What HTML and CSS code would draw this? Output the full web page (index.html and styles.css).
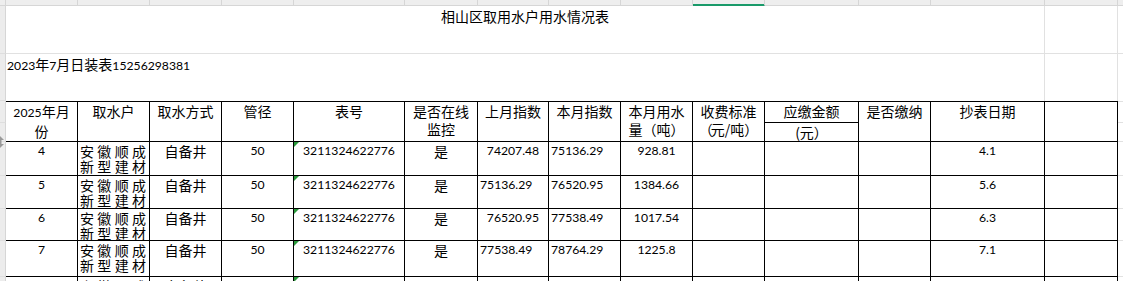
FILE: index.html
```html
<!DOCTYPE html>
<html lang="zh-CN">
<head>
<meta charset="utf-8">
<title>相山区取用水户用水情况表</title>
<link rel="stylesheet" href="styles.css">
</head>
<body>
<div class="sheet">
  <!-- column header strip -->
  <div class="corner"></div>
  <div class="hd"></div><div class="hd"></div><div class="hd"></div><div class="hd"></div><div class="hd"></div>
  <div class="hd"></div><div class="hd"></div><div class="hd"></div><div class="hd"></div><div class="hd sel"></div>
  <div class="hd"></div><div class="hd"></div><div class="hd"></div><div class="hd"></div><div class="hd hf"></div>

  <!-- title row -->
  <div class="g"></div>
  <div class="w title span13">相山区取用水户用水情况表</div>
  <div class="w"></div>
  <div class="w f"></div>

  <!-- sub title row -->
  <div class="g"></div>
  <div class="w sub span13 nb"><span class="d">2023</span>年<span class="d">7</span>月日装表<span class="d">15256298381</span></div>
  <div class="w nb"></div>
  <div class="w f nb"></div>

  <!-- header row A -->
  <div class="g"></div>
  <div class="t th rs2"><span class="d">2025</span>年月<br>份</div>
  <div class="t th rs2">取水户</div>
  <div class="t th rs2">取水方式</div>
  <div class="t th rs2">管径</div>
  <div class="t th rs2">表号</div>
  <div class="t th rs2">是否在线<br>监控</div>
  <div class="t th rs2">上月指数</div>
  <div class="t th rs2">本月指数</div>
  <div class="t th rs2">本月用水<br>量（吨）</div>
  <div class="t th rs2">收费标准<br><span class="op">（</span>元/吨）</div>
  <div class="t th">应缴金额</div>
  <div class="t th rs2">是否缴纳</div>
  <div class="t th rs2">抄表日期</div>
  <div class="t th rs2"></div>
  <div class="w f ft"></div>

  <!-- header row B -->
  <div class="g"></div>
  <div class="t th2">(元）</div>
  <div class="w f"></div>

  <!-- data row 1 -->
  <div class="g"></div>
  <div class="t n">4</div>
  <div class="t nm"><span>安徽顺成</span><span>新型建材</span></div>
  <div class="t">自备井</div>
  <div class="t n">50</div>
  <div class="t n tk">3211324622776</div>
  <div class="t">是</div>
  <div class="t n">74207.48</div>
  <div class="t n l">75136.29</div>
  <div class="t n">928.81</div>
  <div class="t"></div>
  <div class="t"></div>
  <div class="t"></div>
  <div class="t n">4.1</div>
  <div class="t"></div>
  <div class="w f"></div>

  <!-- data row 2 -->
  <div class="g"></div>
  <div class="t n">5</div>
  <div class="t nm"><span>安徽顺成</span><span>新型建材</span></div>
  <div class="t">自备井</div>
  <div class="t n">50</div>
  <div class="t n tk">3211324622776</div>
  <div class="t">是</div>
  <div class="t n l">75136.29</div>
  <div class="t n l">76520.95</div>
  <div class="t n">1384.66</div>
  <div class="t"></div>
  <div class="t"></div>
  <div class="t"></div>
  <div class="t n">5.6</div>
  <div class="t"></div>
  <div class="w f"></div>

  <!-- data row 3 -->
  <div class="g"></div>
  <div class="t n">6</div>
  <div class="t nm"><span>安徽顺成</span><span>新型建材</span></div>
  <div class="t">自备井</div>
  <div class="t n">50</div>
  <div class="t n tk">3211324622776</div>
  <div class="t">是</div>
  <div class="t n">76520.95</div>
  <div class="t n l">77538.49</div>
  <div class="t n">1017.54</div>
  <div class="t"></div>
  <div class="t"></div>
  <div class="t"></div>
  <div class="t n">6.3</div>
  <div class="t"></div>
  <div class="w f"></div>

  <!-- data row 4 -->
  <div class="g"></div>
  <div class="t n">7</div>
  <div class="t nm"><span>安徽顺成</span><span>新型建材</span></div>
  <div class="t">自备井</div>
  <div class="t n">50</div>
  <div class="t n tk">3211324622776</div>
  <div class="t">是</div>
  <div class="t n l">77538.49</div>
  <div class="t n l">78764.29</div>
  <div class="t n">1225.8</div>
  <div class="t"></div>
  <div class="t"></div>
  <div class="t"></div>
  <div class="t n">7.1</div>
  <div class="t"></div>
  <div class="w f"></div>

  <!-- data row 5 (partly visible) -->
  <div class="g"></div>
  <div class="t n">8</div>
  <div class="t nm"><span>安徽顺成</span><span>新型建材</span></div>
  <div class="t">自备井</div>
  <div class="t n">50</div>
  <div class="t n tk">3211324622776</div>
  <div class="t">是</div>
  <div class="t n">78764.29</div>
  <div class="t n l"></div>
  <div class="t n"></div>
  <div class="t"></div>
  <div class="t"></div>
  <div class="t"></div>
  <div class="t n"></div>
  <div class="t"></div>
  <div class="w f"></div>
</div>

<svg class="grip" width="8" height="12" viewBox="0 0 8 12" aria-hidden="true">
  <path d="M4 0 L8 4 L5.5 4 L5.5 8 L8 8 L4 12 L0 8 L2.5 8 L2.5 4 L0 4 Z" fill="#9a9a9a"/>
</svg>
</body>
</html>
```

FILE: styles.css
```css
* {
  box-sizing: border-box;
}

html,
body {
  margin: 0;
  padding: 0;
}

body {
  width: 1123px;
  height: 281px;
  overflow: hidden;
  position: relative;
  background: #ffffff;
  color: #000000;
  font-family: "Noto Sans CJK SC", "Noto Sans CJK JP", sans-serif;
  font-size: 14px;
  text-spacing-trim: space-all;
}

.sheet {
  display: grid;
  grid-template-columns: 6px 72px 72px 72px 72px 111px 73px 71px 72px 72px 72px 94px 72px 114px 73px 1fr;
  grid-template-rows: 6px 48px 47px 22px 19px 34px 33px 32px 36px 34px;
}

/* column header strip */
.corner,
.hd {
  background: #eeeeee;
  border-right: 1px solid #d6d6d6;
  border-bottom: 1px solid #d6d6d6;
}

.hd.hf {
  border-right: none;
}

.hd.sel {
  border-bottom-color: #1a9a6a;
  box-shadow: inset 0 -1px 0 #1a9a6a;
}

/* row gutter */
.g {
  background: #ececec;
  border-right: 1px solid #d6d6d6;
  border-bottom: 1px solid #dedede;
}

/* plain worksheet cells */
.w {
  background: #ffffff;
  border-right: 1px solid #e1e1e1;
  border-bottom: 1px solid #e1e1e1;
}

.w.f {
  border-right: none;
}

.w.nb {
  border-bottom: none;
}

.w.ft {
  border-top: 1px solid #e1e1e1;
}

.span13 {
  grid-column: span 13;
}

.title {
  text-align: center;
  line-height: 18px;
  padding-top: 1px;
  white-space: nowrap;
}

.sub {
  line-height: 18px;
  padding: 1px 0 0 1px;
  white-space: nowrap;
}

.d {
  font-family: "Lato", "Liberation Sans", sans-serif;
  font-size: 12.2px;
}

/* table cells */
.t {
  position: relative;
  background: #ffffff;
  border-right: 1px solid #000000;
  border-bottom: 1px solid #000000;
  text-align: center;
  line-height: 15px;
  padding: 2px 2px 0;
  overflow: hidden;
  white-space: nowrap;
}

.th {
  border-top: 1px solid #000000;
  line-height: 18px;
  padding-top: 0;
}

.th2 {
  line-height: 18px;
  padding-top: 0;
}

.op {
  display: inline-block;
  width: 12px;
  text-align: right;
}

.rs2 {
  grid-row: span 2;
}

.n {
  font-family: "Lato", "Liberation Sans", sans-serif;
  font-size: 12.2px;
  padding-top: 1px;
}

.l {
  text-align: left;
  padding-left: 2px;
}

.nm {
  padding: 2px 3px 0 2px;
}

.nm span {
  display: block;
  text-align: justify;
  text-align-last: justify;
}

/* small green marker: number stored as text */
.tk::before {
  content: "";
  position: absolute;
  left: 0;
  top: 0;
  border-top: 5px solid #2b9a3c;
  border-right: 5px solid transparent;
}

.grip {
  position: absolute;
  left: -4px;
  top: 136px;
}
```
